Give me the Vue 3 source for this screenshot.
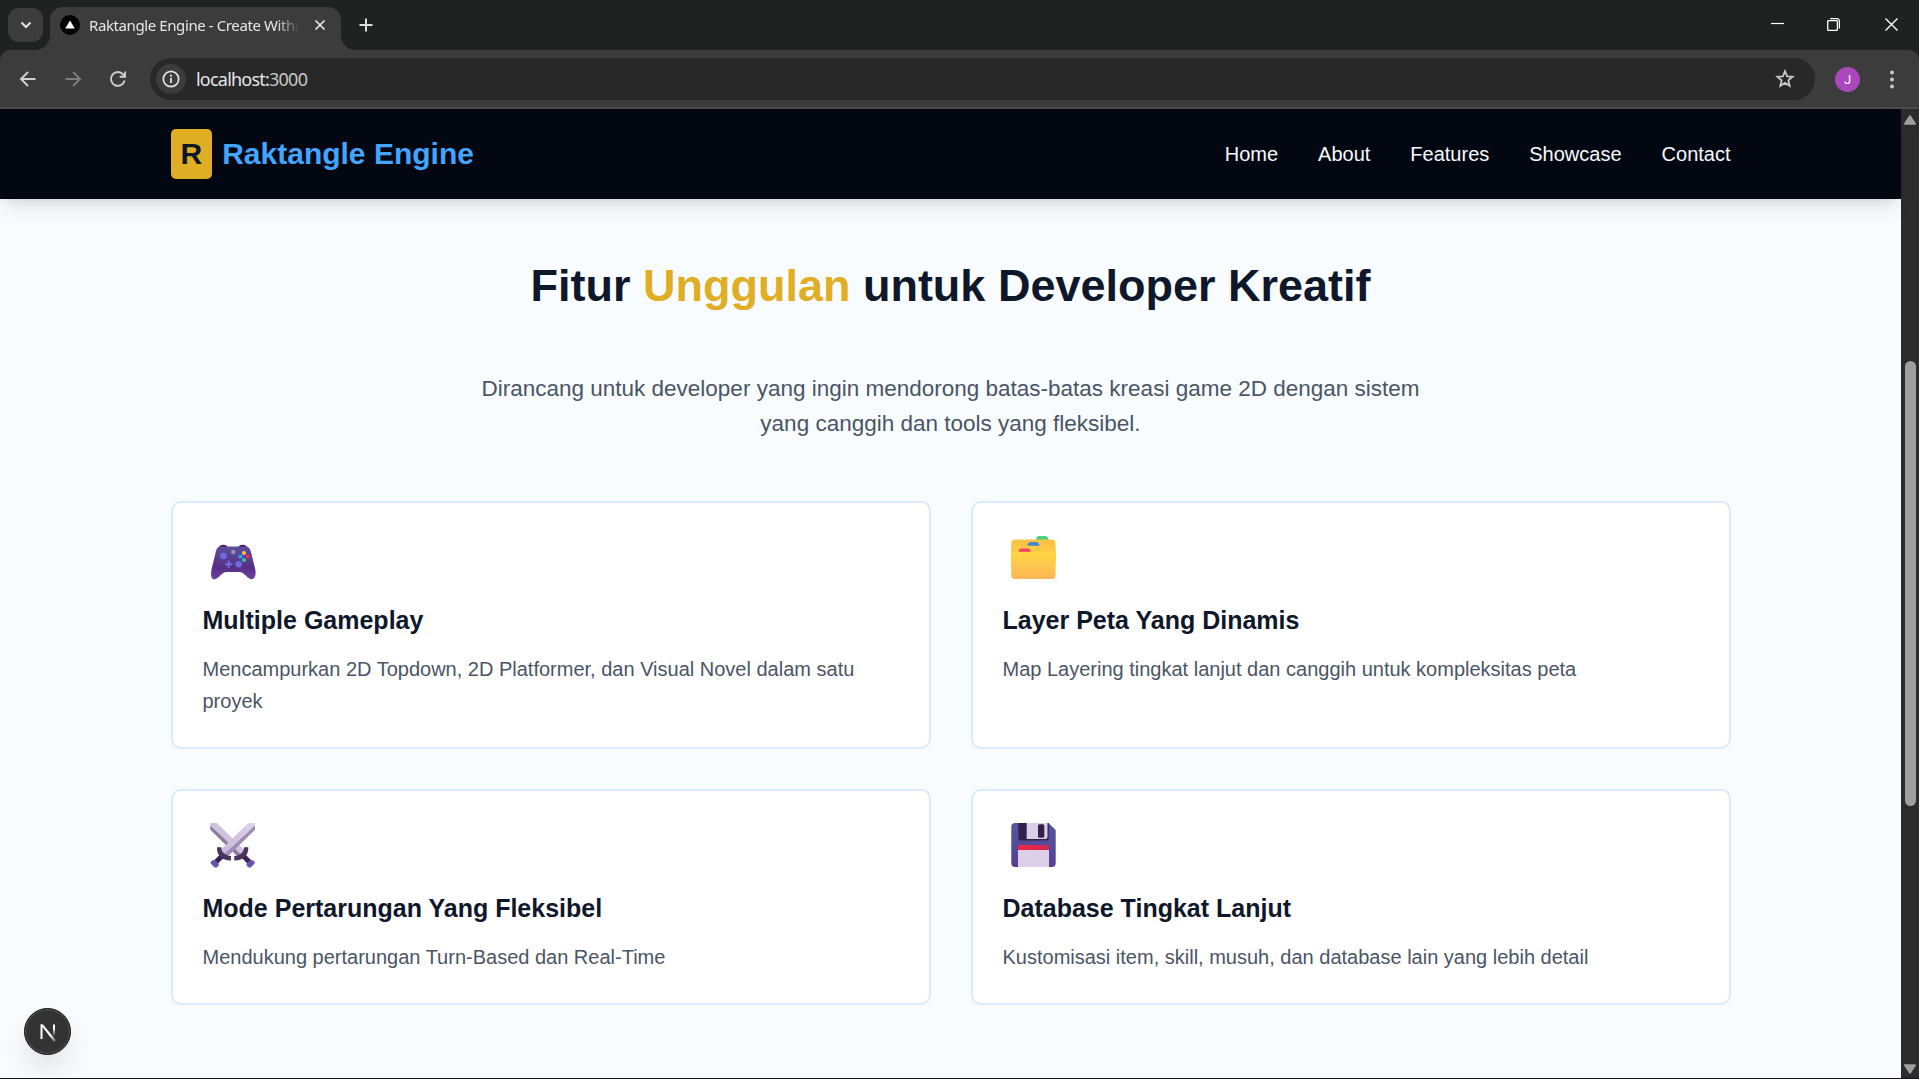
<script setup>
const links = ['Home', 'About', 'Features', 'Showcase', 'Contact']
const cards = [
  { icon: 'gamepad', title: 'Multiple Gameplay', text: 'Mencampurkan 2D Topdown, 2D Platformer, dan Visual Novel dalam satu proyek' },
  { icon: 'folder', title: 'Layer Peta Yang Dinamis', text: 'Map Layering tingkat lanjut dan canggih untuk kompleksitas peta' },
  { icon: 'swords', title: 'Mode Pertarungan Yang Fleksibel', text: 'Mendukung pertarungan Turn-Based dan Real-Time' },
  { icon: 'floppy', title: 'Database Tingkat Lanjut', text: 'Kustomisasi item, skill, musuh, dan database lain yang lebih detail' },
]
</script>

<template>
  <div class="window">
    <div class="tabstrip">
      <button class="tab-search">
        <svg width="12" height="8" viewBox="0 0 12 8"><path d="M1.5 1.5 6 6l4.500-4.500" fill="none" stroke="#e3e3e3" stroke-width="2" /></svg>
      </button>
      <div class="tab">
        <svg class="favicon" width="20" height="20" viewBox="0 0 20 20"><circle cx="10" cy="10" r="10" fill="#000" /><path d="M10 5.500 14.800 13.500H5.200z" fill="#fff" /></svg>
        <span class="tab-title">Raktangle Engine - Create Witho</span>
        <svg class="tab-close" width="12" height="12" viewBox="0 0 12 12"><path d="M1.500 1.500l9 9M10.500 1.500l-9 9" stroke="#e8e8e8" stroke-width="1.700" /></svg>
      </div>
      <svg class="new-tab" width="14" height="14" viewBox="0 0 14 14"><path d="M7 .5v13M.5 7h13" stroke="#dcdcdc" stroke-width="2" /></svg>
      <div class="controls">
        <svg width="13" height="13" viewBox="0 0 13 13"><path d="M0 5.500h13" stroke="#fff" stroke-width="1.200" /></svg>
        <svg width="13" height="13" viewBox="0 0 13 13"><path d="M3.200.6H10a2.400 2.400 0 0 1 2.400 2.400v7.500" fill="none" stroke="#fff" stroke-width="1.200" /><rect x=".7" y="2.700" width="9.700" height="9.700" rx=".8" fill="none" stroke="#fff" stroke-width="1.300" /></svg>
        <svg class="close" width="13" height="13" viewBox="0 0 13 13"><path d="M.5.5l12 12M12.500.5l-12 12" stroke="#fff" stroke-width="1.400" /></svg>
      </div>
    </div>
    <div class="toolbar">
      <svg class="nav-icon" width="20" height="20" viewBox="0 0 20 20"><path d="M17.500 10H3.500M10 3 3 10l7 7" fill="none" stroke="#d0d0d0" stroke-width="1.900" /></svg>
      <svg class="nav-icon" width="20" height="20" viewBox="0 0 20 20"><path d="M2.500 10h14M10 3l7 7-7 7" fill="none" stroke="#7d7d7d" stroke-width="1.900" /></svg>
      <svg class="nav-icon" width="20" height="20" viewBox="0 0 20 20"><path d="M16.600 11.500A6.900 6.900 0 1 1 15.300 5.600L17 7.500M17.100 2.500v5.200h-5.400" fill="none" stroke="#d0d0d0" stroke-width="1.900" /></svg>
      <div class="omnibox">
        <span class="info">
          <svg width="18" height="18" viewBox="0 0 18 18"><circle cx="9" cy="9" r="7.700" fill="none" stroke="#e3e3e3" stroke-width="1.700" /><path d="M9 8v5M9 4.800v1.900" stroke="#e3e3e3" stroke-width="1.800" /></svg>
        </span>
        <span class="url">localhost:<i>3000</i></span>
        <svg class="star" width="20" height="20" viewBox="0 0 20 20"><path d="M10 2.200l2.100 5.100 5.500.45-4.200 3.600 1.300 5.400L10 13.900l-4.700 2.850 1.300-5.400-4.200-3.600 5.500-.45z" fill="none" stroke="#c9c9c9" stroke-width="1.800" /></svg>
      </div>
      <span class="avatar">J</span>
      <svg class="kebab" width="4" height="19" viewBox="0 0 4 19"><g fill="#c9c9c9"><circle cx="2" cy="2.500" r="2" /><circle cx="2" cy="9.500" r="2" /><circle cx="2" cy="16.500" r="2" /></g></svg>
    </div>

    <div class="viewport">
      <div class="page">
        <header>
          <div class="inner">
            <div class="brand"><span class="mark">R</span><span class="name">Raktangle Engine</span></div>
            <nav><a v-for="l in links" :key="l">{{ l }}</a></nav>
          </div>
        </header>
        <main>
          <h2>Fitur <em>Unggulan</em> untuk Developer Kreatif</h2>
          <p class="lead">Dirancang untuk developer yang ingin mendorong batas-batas kreasi game 2D dengan sistem<br>yang canggih dan tools yang fleksibel.</p>
          <div class="grid">
            <article v-for="c in cards" :key="c.icon">
              <div class="art">
                <svg v-if="c.icon === 'gamepad'" width="46" height="48" viewBox="0 0 46 48">
                  <defs>
                    <linearGradient id="pad" x1="0" y1="0" x2="0" y2="1"><stop offset="0" stop-color="#5b4f9c" /><stop offset=".65" stop-color="#572f86" /><stop offset="1" stop-color="#6c42a0" /></linearGradient>
                  </defs>
                  <path d="M8 15q2-3.200 5.500-3.200 3 0 4 2V17H8zM38 15q-2-3.200-5.500-3.200-3 0-4 2V17H38z" fill="#4b1746" />
                  <path d="M10.500 13.600H35.500C39 13.600 40.300 16 41.200 20L45.300 36.500C46.100 41.500 45.300 46.200 41.800 46.200 37.500 46.200 34 39 29.500 39H16.500C12 39 8.500 46.200 4.500 46.200 1 46.200 .6 41.500 1.500 36.500L5.500 20C6.400 16 7.500 13.600 10.500 13.600z" fill="url(#pad)" />
                  <circle cx="13.300" cy="23" r="3.200" fill="#706bdc" /><circle cx="28.700" cy="31.300" r="3.200" fill="#706bdc" />
                  <path d="M18.700 27.700v7.200M15.100 31.300h7.200" stroke="#7770e4" stroke-width="2" />
                  <circle cx="23.300" cy="19" r="2.200" fill="#9a92a5" />
                  <circle cx="34" cy="20" r="2" fill="#f9c04a" /><circle cx="30.400" cy="23.500" r="2" fill="#20a8f4" /><circle cx="37.700" cy="23.500" r="2" fill="#f32756" /><circle cx="34" cy="27" r="2" fill="#27d08a" />
                </svg>
                <svg v-else-if="c.icon === 'folder'" width="46" height="48" viewBox="0 -2 46 48">
                  <defs><linearGradient id="fold" x1="0" y1="0" x2="0" y2="1"><stop offset="0" stop-color="#ffd743" /><stop offset="1" stop-color="#ffb656" /></linearGradient></defs>
                  <path d="M26 5q.4-4 3-4h6q3 0 3.500 4z" fill="#4ad07f" />
                  <path d="M1.300 8q0-3.500 3.500-3.500h37.200Q45.500 4.500 45.500 8v20H1.300z" fill="#fbc343" />
                  <path d="M17.500 11q.4-4 3.500-4h5q3 0 3.500 4z" fill="#3e87d2" />
                  <path d="M1.300 13.500q0-2.800 3-2.800h38.200q3 0 3 2.800V32H1.300z" fill="#fdc844" />
                  <path d="M8.500 17.500q.4-4 3-4h6q3 0 3.500 4z" fill="#f83d62" />
                  <path d="M1.300 20q0-3.300 3-3.300h38.200q3 0 3 3.300v20.500q0 3.500-3.500 3.500H4.800Q1.300 44 1.300 40.500z" fill="url(#fold)" />
                </svg>
                <svg v-else-if="c.icon === 'swords'" width="46" height="48" viewBox="0 0 46 48">
                  <defs><linearGradient id="bl" x1="1" y1="0" x2="0" y2="1"><stop offset="0" stop-color="#ded5e8" /><stop offset="1" stop-color="#c4b6d6" /></linearGradient></defs>
                  <path d="M.4 2H6.800L34 28.500 30 37 .4 8.500z" fill="#cfc3da" />
                  <path d="M.4 4.800v4L29 37l3-2.500z" fill="#8f7aa4" />
                  <path d="M45 2h-6.500L11.500 28l4.500 8.500L45 8.500z" fill="url(#bl)" />
                  <path d="M45 4.500v4.200L16.500 36.500 13.500 34z" fill="#9e8cb2" />
                  <path d="M11.500 35.500 5.500 41.500M33.900 35.500l6 6" stroke="#392055" stroke-width="5" />
                  <path d="M7 26.300h4.300c.2 5 3.700 8.300 9.700 8.800v4.400C12.500 39.800 6.500 34.500 7 26.300zM38.300 26.300H34c-.2 5-3.700 8.300-9.700 8.800v4.400c8.500.3 14.500-5 14-13.200z" fill="#49345c" />
                  <path d="M2.500 39.300h3l3.200 3.200v2.200l-2 1.700H4.500L.7 42.600v-1.500zM42.800 39.300h-3l-3.200 3.200v2.200l2 1.700h2.200l3.800-3.800v-1.500z" fill="#6555ae" />
                </svg>
                <svg v-else width="46" height="48" viewBox="0 -1 46 48">
                  <defs><linearGradient id="fl" x1="0" y1="0" x2="0" y2="1"><stop offset="0" stop-color="#5059a0" /><stop offset="1" stop-color="#5b3d91" /></linearGradient><linearGradient id="rd"><stop offset="0" stop-color="#f32644" /><stop offset="1" stop-color="#cf2450" /></linearGradient></defs>
                  <path d="M4.800 1H38.500l7.200 7v33q0 4-4 4H5.300q-4 0-4-4V4.500Q1.300 1 4.800 1z" fill="url(#fl)" />
                  <path d="M8.300 1h30.400v14.500q0 3-3 3H11.300q-3 0-3-3z" fill="#34204f" />
                  <path d="M16.700 1h20.800v13.500q0 2.500-2.500 2.500H16.700z" fill="#d9cfe6" />
                  <rect x="28" y="2.300" width="6.300" height="13.400" rx="1.500" fill="#32204d" />
                  <path d="M8 28h31v17H8z" fill="#dcd0e8" /><path d="M8 28v-3q0-2 2-2h27q2 0 2 2v3z" fill="url(#rd)" />
                </svg>
              </div>
              <h3>{{ c.title }}</h3>
              <p>{{ c.text }}</p>
            </article>
          </div>
        </main>
        <div class="dev-badge">
          <svg width="18" height="20" viewBox="0 0 18 20"><defs><linearGradient id="nf" x1="0" y1="0" x2="0" y2="1"><stop offset=".3" stop-color="#fff" /><stop offset="1" stop-color="#fff" stop-opacity="0" /></linearGradient><linearGradient id="nd" x1="0" y1="0" x2="1" y2="1"><stop offset=".65" stop-color="#fff" /><stop offset="1" stop-color="#fff" stop-opacity=".2" /></linearGradient></defs><path d="M1.500 17V2.500h2V17z" fill="#fff" /><path d="M1.500 2.500H4L17 18.500l-2 1.200z" fill="url(#nd)" /><path d="M14 2.500h2v12h-2z" fill="url(#nf)" /></svg>
        </div>
      </div>
      <div class="scrollbar">
        <svg width="14" height="10" viewBox="0 0 14 10"><path d="M7 1.200 12 8.800H2z" fill="#9f9f9f" stroke="#9f9f9f" stroke-width="2" stroke-linejoin="round" /></svg>
        <div class="thumb"></div>
        <svg class="down" width="14" height="10" viewBox="0 0 14 10"><path d="M7 8.800 2 1.200h10z" fill="#9f9f9f" stroke="#9f9f9f" stroke-width="2" stroke-linejoin="round" /></svg>
      </div>
    </div>
  </div>
</template>

<style>
body { margin: 0; overflow: hidden; }
</style>

<style scoped>
* { box-sizing: border-box; }
svg { display: block; flex: none; }
.window { width: 1919px; height: 1079px; display: flex; flex-direction: column; background: #202221; font-family: "Liberation Sans", Arial, sans-serif; border-bottom: 1px solid #141420; overflow: hidden; }
.tabstrip { height: 50px; flex: none; display: flex; align-items: flex-start; background: #202221; }
.tab-search { width: 35px; height: 34px; margin: 8px 0 0 8px; padding: 0; border: 0; border-radius: 11px; background: #3c3c3c; display: flex; align-items: center; justify-content: center; }
.tab { position: relative; width: 291px; height: 43px; margin: 7px 0 0 7px; padding: 0 15px 7px 10px; background: #3c3c3c; border-radius: 13px 13px 0 0; display: flex; align-items: center; }
.tab::before, .tab::after { content: ""; position: absolute; bottom: 0; width: 14px; height: 14px; }
.tab::before { left: -14px; background: radial-gradient(circle at 0 0, transparent 13.5px, #3c3c3c 14px); }
.tab::after { right: -14px; background: radial-gradient(circle at 100% 0, transparent 13.5px, #3c3c3c 14px); }
.tab-title { width: 216px; margin-left: 9px; font: 15px/20px "Noto Sans", sans-serif; letter-spacing: -.4px; color: #e6e6e6; white-space: nowrap; mask-image: linear-gradient(90deg, #000 188px, transparent 210px); }
.tab-close { margin-left: auto; }
.new-tab { margin: 18px 0 0 18px; }
.controls { margin: 18px 21px 0 auto; display: flex; gap: 43px; }
.close { margin-left: 2px; }
.toolbar { height: 59px; flex: none; display: flex; align-items: center; padding: 1px 25px 0 18px; background: #3c3c3c; border-bottom: 2px solid #4a4a4a; border-radius: 10px 10px 0 0; }
.nav-icon { margin-right: 25px; }
.omnibox { width: 1665px; height: 42px; margin-left: -3px; border-radius: 21px; background: #282828; display: flex; align-items: center; padding: 0 20px 0 6px; }
.info { width: 30px; height: 30px; border-radius: 50%; background: #3c3c3c; display: flex; align-items: center; justify-content: center; }
.url { margin-left: 10px; font: 18px/24px "Noto Sans", sans-serif; letter-spacing: -.78px; color: #e6e6e6; }
.url i { font-style: normal; color: #c7c7c7; }
.star { margin-left: auto; }
.avatar { width: 25px; height: 25px; margin-left: 20px; border-radius: 50%; background: #ab47bc; color: #fff; font: 13px/26px Roboto, sans-serif; text-align: center; }
.kebab { margin-left: auto; }
.viewport { flex: 1; min-height: 0; display: flex; }
.page { position: relative; width: 1901px; background: #f8fcff; }
header { position: relative; height: 90px; background: #030712; box-shadow: 0 12px 19px -4px rgba(0,0,0,.1), 0 5px 7.5px -5px rgba(0,0,0,.1); }
.inner { width: 1560px; height: 100%; margin: 0 auto; display: flex; align-items: center; justify-content: space-between; }
.brand { display: flex; align-items: center; gap: 10px; font-size: 30px; line-height: 50px; font-weight: 700; }
.mark { padding: 0 10px; background: #e0ae24; color: #0f172a; border-radius: 5px; }
.name { color: #42a5ff; }
nav { display: flex; gap: 40px; font-size: 20px; line-height: 30px; color: #f8fafc; }
main { width: 1560px; margin: 0 auto; padding-top: 62px; }
h2 { margin: 0; font-size: 45px; line-height: 50px; font-weight: 700; text-align: center; color: #0f172a; }
em { font-style: normal; color: #e0ae24; }
.lead { margin: 60px 0; font-size: 22.5px; line-height: 35px; text-align: center; color: #4a5565; }
.grid { display: grid; grid-template-columns: 1fr 1fr; gap: 40px; }
article { padding: 30px; border: 2px solid #dbeafe; border-radius: 10px; background: #fff; }
.art { height: 50px; padding-left: 7px; }
h3 { margin: 20px 0 15px; font-size: 25px; line-height: 35px; font-weight: 700; color: #0f172a; }
article p { margin: 0; font-size: 20px; line-height: 32px; color: #4a5565; }
.dev-badge { position: absolute; left: 24px; bottom: 23px; width: 47px; height: 47px; border-radius: 50%; background: #333; border: 1px solid #111; box-shadow: inset 0 0 0 1px #555, 0 16px 32px -8px rgba(0,0,0,.2); display: flex; align-items: center; justify-content: center; }
.scrollbar { width: 18px; background: #2c2c2c; display: flex; flex-direction: column; align-items: center; padding: 6px 0 4px; }
.thumb { width: 11px; height: 445px; margin-top: 236px; border-radius: 6px; background: #9f9f9f; }
.down { margin-top: auto; }
</style>
